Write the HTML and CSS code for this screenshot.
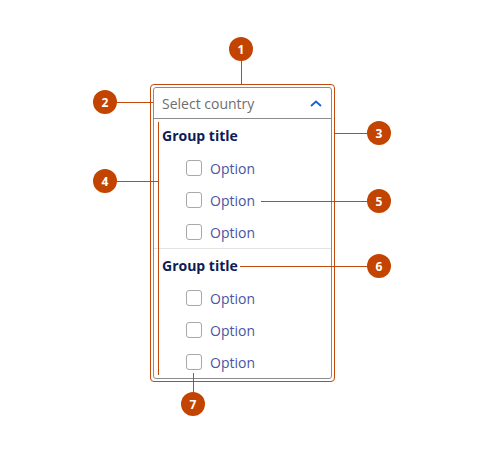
FILE: index.html
```html
<!DOCTYPE html>
<html lang="en">
<head>
<meta charset="UTF-8">
<title>Grouped select anatomy</title>
<link rel="stylesheet" href="styles.css">
</head>
<body>
<div class="stage">

  <div class="frame">
    <div class="select">
      <div class="select-head">
        <span class="placeholder">Select country</span>
        <svg class="chevron" width="12" height="7" viewBox="0 0 12 7">
          <path d="M1 6 L6 1.5 L11 6" fill="none" stroke="#1662dd" stroke-width="1.8"/>
        </svg>
      </div>

      <div class="group">
        <div class="group-title">Group title</div>
        <label class="option"><span class="box"></span>Option</label>
        <label class="option"><span class="box"></span>Option</label>
        <label class="option"><span class="box"></span>Option</label>
      </div>

      <div class="group">
        <div class="group-title">Group title</div>
        <label class="option"><span class="box"></span>Option</label>
        <label class="option"><span class="box"></span>Option</label>
        <label class="option"><span class="box"></span>Option</label>
      </div>
    </div>
  </div>

  <!-- annotation lines -->
  <div class="line v" style="left:241px; top:60px; height:24px"></div>
  <div class="line h" style="left:112px; top:102px; width:41px"></div>
  <div class="line h" style="left:335px; top:133px; width:36px"></div>
  <div class="line h" style="left:112px; top:181px; width:47px"></div>
  <div class="line v" style="left:158px; top:122px; height:253px"></div>
  <div class="line h" style="left:261px; top:201px; width:110px"></div>
  <div class="line h" style="left:240px; top:266px; width:131px"></div>
  <div class="line v" style="left:193px; top:373px; height:22px"></div>

  <!-- badges -->
  <div class="badge" style="left:229px; top:37px">1</div>
  <div class="badge" style="left:93px; top:90px">2</div>
  <div class="badge" style="left:367px; top:121px">3</div>
  <div class="badge" style="left:93px; top:169px">4</div>
  <div class="badge" style="left:367px; top:189px">5</div>
  <div class="badge" style="left:367px; top:254px">6</div>
  <div class="badge" style="left:181px; top:392px">7</div>

</div>
</body>
</html>
```

FILE: styles.css
```css
body {
    margin: 0;
    background-color: #fff;
    font-family: "Open Sans", sans-serif;
}

.stage {
    position: relative;
    width: 500px;
    height: 450px;
    overflow: hidden;
    padding-top: 84px;
    box-sizing: border-box;
}

.frame {
    margin-left: 150px;
    width: 185px;
    height: 298px;
    box-sizing: border-box;
    border: 1px solid #c24a0c;
    border-radius: 4px;
    padding: 2px;
}

.select {
    height: 292px;
    box-sizing: border-box;
    border: 1px solid #8c8c8c;
    border-radius: 3px;
}

.select-head {
    height: 30px;
    display: flex;
    align-items: center;
    justify-content: space-between;
    padding: 0 9px 0 8px;
    border-bottom: 1px solid #8c8c8c;
}

.placeholder {
    color: #6e6e6e;
    font-size: 14px;
}

.group + .group {
    border-top: 1px solid #e3e3e3;
}

.group-title {
    height: 33px;
    display: flex;
    align-items: center;
    padding-left: 8px;
    color: #0d1c56;
    font-weight: 700;
    font-size: 14px;
}

.option {
    height: 32px;
    display: flex;
    align-items: center;
    gap: 8px;
    padding-left: 32px;
    color: #4b55a0;
    font-size: 14px;
}

.box {
    width: 14px;
    height: 14px;
    border: 1px solid #a8a8a8;
    border-radius: 3px;
}

.line {
    position: absolute;
    background-color: #c24a0c;
}

.line.v {
    width: 1px;
}

.line.h {
    height: 1px;
}

.badge {
    position: absolute;
    width: 24px;
    height: 24px;
    border-radius: 50%;
    background-color: #c24400;
    color: #fff;
    font-size: 12px;
    font-weight: 700;
    display: flex;
    align-items: center;
    justify-content: center;
}
```
